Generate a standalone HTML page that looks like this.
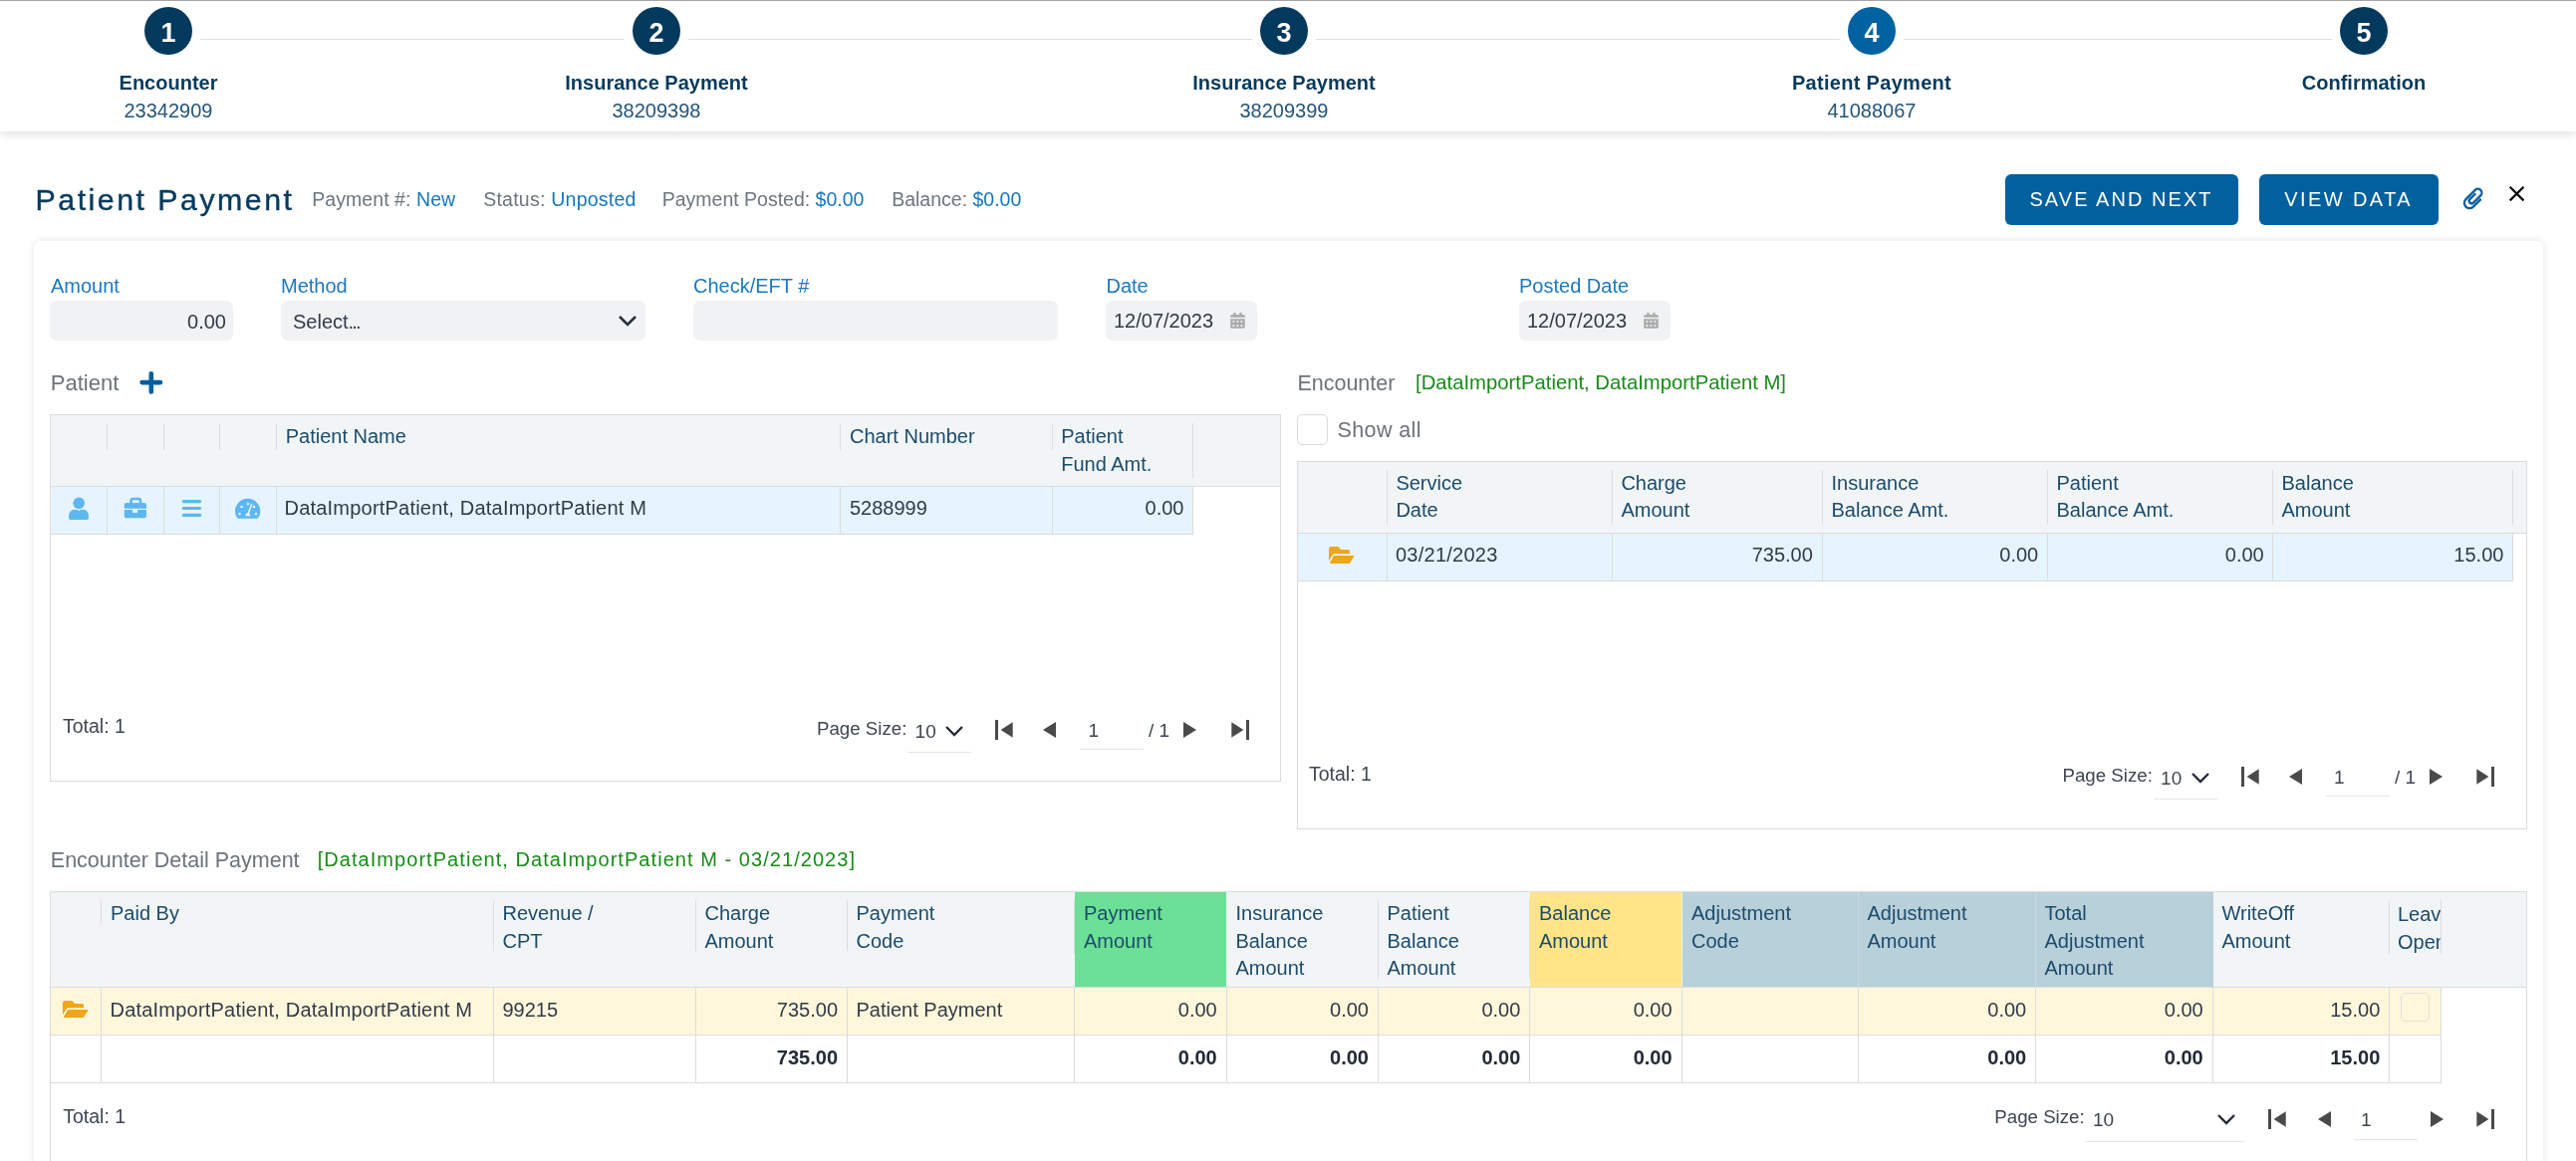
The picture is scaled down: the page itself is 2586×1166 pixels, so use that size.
<!DOCTYPE html>
<html><head><meta charset="utf-8"><title>Patient Payment</title>
<style>
html,body{margin:0;padding:0;width:2586px;height:1166px;overflow:hidden;background:#fff;font-family:"Liberation Sans", sans-serif;}
div{box-sizing:border-box;}
svg{position:absolute;overflow:visible;}
</style></head><body><div style="position:absolute;left:0;top:0;width:2586px;height:1166px;overflow:hidden;will-change:transform;">
<div style="position:absolute;left:0px;top:0px;width:2586px;height:132px;background:#fff;box-shadow:0 3px 8px rgba(0,0,0,0.12);border-top:1px solid #a6a6a6;"></div>
<div style="position:absolute;left:201px;top:39px;width:426px;height:1px;background:#dcdfe2;"></div>
<div style="position:absolute;left:691px;top:39px;width:566px;height:1px;background:#dcdfe2;"></div>
<div style="position:absolute;left:1321px;top:39px;width:526px;height:1px;background:#dcdfe2;"></div>
<div style="position:absolute;left:1911px;top:39px;width:430px;height:1px;background:#dcdfe2;"></div>
<div style="position:absolute;left:145px;top:7px;width:48px;height:48px;background:#03395d;border-radius:50%;"></div>
<div style="position:absolute;left:-231px;width:800px;text-align:center;top:19.75px;font-size:27px;line-height:27px;color:#fff;font-weight:bold;white-space:nowrap;">1</div>
<div style="position:absolute;left:-231px;width:800px;text-align:center;top:72.50px;font-size:20px;line-height:20px;color:#073a5c;font-weight:bold;white-space:nowrap;">Encounter</div>
<div style="position:absolute;left:-231px;width:800px;text-align:center;top:101.30px;font-size:20px;line-height:20px;color:#23557a;font-weight:normal;white-space:nowrap;">23342909</div>
<div style="position:absolute;left:635px;top:7px;width:48px;height:48px;background:#03395d;border-radius:50%;"></div>
<div style="position:absolute;left:259px;width:800px;text-align:center;top:19.75px;font-size:27px;line-height:27px;color:#fff;font-weight:bold;white-space:nowrap;">2</div>
<div style="position:absolute;left:259px;width:800px;text-align:center;top:72.50px;font-size:20px;line-height:20px;color:#073a5c;font-weight:bold;white-space:nowrap;">Insurance Payment</div>
<div style="position:absolute;left:259px;width:800px;text-align:center;top:101.30px;font-size:20px;line-height:20px;color:#23557a;font-weight:normal;white-space:nowrap;">38209398</div>
<div style="position:absolute;left:1265px;top:7px;width:48px;height:48px;background:#03395d;border-radius:50%;"></div>
<div style="position:absolute;left:889px;width:800px;text-align:center;top:19.75px;font-size:27px;line-height:27px;color:#fff;font-weight:bold;white-space:nowrap;">3</div>
<div style="position:absolute;left:889px;width:800px;text-align:center;top:72.50px;font-size:20px;line-height:20px;color:#073a5c;font-weight:bold;white-space:nowrap;">Insurance Payment</div>
<div style="position:absolute;left:889px;width:800px;text-align:center;top:101.30px;font-size:20px;line-height:20px;color:#23557a;font-weight:normal;white-space:nowrap;">38209399</div>
<div style="position:absolute;left:1855px;top:7px;width:48px;height:48px;background:#0062a0;border-radius:50%;"></div>
<div style="position:absolute;left:1479px;width:800px;text-align:center;top:19.75px;font-size:27px;line-height:27px;color:#fff;font-weight:bold;white-space:nowrap;">4</div>
<div style="position:absolute;left:1479px;width:800px;text-align:center;top:72.50px;font-size:20px;line-height:20px;color:#073a5c;font-weight:bold;letter-spacing:0.3px;white-space:nowrap;">Patient Payment</div>
<div style="position:absolute;left:1479px;width:800px;text-align:center;top:101.30px;font-size:20px;line-height:20px;color:#23557a;font-weight:normal;white-space:nowrap;">41088067</div>
<div style="position:absolute;left:2349px;top:7px;width:48px;height:48px;background:#03395d;border-radius:50%;"></div>
<div style="position:absolute;left:1973px;width:800px;text-align:center;top:19.75px;font-size:27px;line-height:27px;color:#fff;font-weight:bold;white-space:nowrap;">5</div>
<div style="position:absolute;left:1973px;width:800px;text-align:center;top:72.50px;font-size:20px;line-height:20px;color:#073a5c;font-weight:bold;white-space:nowrap;">Confirmation</div>
<div style="position:absolute;left:35.6px;top:186.06px;font-size:30.3px;line-height:30.3px;color:#073a5e;font-weight:normal;letter-spacing:2.5px;white-space:nowrap;-webkit-text-stroke:0.4px #073a5e;">Patient Payment</div>
<div style="position:absolute;left:313.2px;top:191.07px;font-size:19.5px;line-height:19.5px;color:#6c7680;font-weight:normal;letter-spacing:0.07px;white-space:nowrap;">Payment #: <span style="color:#1477bd">New</span></div>
<div style="position:absolute;left:485.2px;top:191.07px;font-size:19.5px;line-height:19.5px;color:#6c7680;font-weight:normal;letter-spacing:0.24px;white-space:nowrap;">Status: <span style="color:#1477bd">Unposted</span></div>
<div style="position:absolute;left:664.7px;top:191.07px;font-size:19.5px;line-height:19.5px;color:#6c7680;font-weight:normal;white-space:nowrap;">Payment Posted: <span style="color:#1477bd">$0.00</span></div>
<div style="position:absolute;left:895.2px;top:191.07px;font-size:19.5px;line-height:19.5px;color:#6c7680;font-weight:normal;white-space:nowrap;">Balance: <span style="color:#1477bd">$0.00</span></div>
<div style="position:absolute;left:2013px;top:175px;width:234px;height:51px;background:#01609e;border-radius:6px;"></div>
<div style="position:absolute;left:1729.525px;width:800px;text-align:center;top:190.30px;font-size:20px;line-height:20px;color:#fff;font-weight:normal;letter-spacing:2.05px;white-space:nowrap;">SAVE AND NEXT</div>
<div style="position:absolute;left:2268px;top:175px;width:180px;height:51px;background:#01609e;border-radius:6px;"></div>
<div style="position:absolute;left:1957.6999999999998px;width:800px;text-align:center;top:190.30px;font-size:20px;line-height:20px;color:#fff;font-weight:normal;letter-spacing:2.4px;white-space:nowrap;">VIEW DATA</div>
<svg style="left:2465px;top:182px" width="35" height="35" viewBox="0 0 35 35"><path d="M25.67 17.89 L17.93 25.64 A5.3 5.3 0 0 1 10.43 18.14 L19.73 8.84 A3.9 3.9 0 0 1 25.25 14.36 L17.96 21.64 A2.5 2.5 0 0 1 14.43 18.1 L20.3 12.23" fill="none" stroke="#0b5f9e" stroke-width="2.3"/></svg>
<svg style="left:2517px;top:185px" width="20" height="20" viewBox="0 0 20 20"><path d="M2.7 2.7 L16.4 16.4 M16.4 2.7 L2.7 16.4" stroke="#000" stroke-width="2.2"/></svg>
<div style="position:absolute;left:34px;top:242px;width:2519px;height:1058px;background:#fff;border-radius:7px;box-shadow:0 0 8px rgba(0,0,0,0.11);"></div>
<div style="position:absolute;left:51px;top:277.00px;font-size:20px;line-height:20px;color:#1b79be;font-weight:normal;white-space:nowrap;">Amount</div>
<div style="position:absolute;left:282px;top:277.00px;font-size:20px;line-height:20px;color:#1b79be;font-weight:normal;white-space:nowrap;">Method</div>
<div style="position:absolute;left:696px;top:277.00px;font-size:20px;line-height:20px;color:#1b79be;font-weight:normal;white-space:nowrap;">Check/EFT #</div>
<div style="position:absolute;left:1110.5px;top:277.00px;font-size:20px;line-height:20px;color:#1b79be;font-weight:normal;white-space:nowrap;">Date</div>
<div style="position:absolute;left:1525px;top:277.00px;font-size:20px;line-height:20px;color:#1b79be;font-weight:normal;white-space:nowrap;">Posted Date</div>
<div style="position:absolute;left:50px;top:302px;width:184px;height:40px;background:#f0f2f4;border-radius:7px;"></div>
<div style="position:absolute;left:282px;top:302px;width:366px;height:40px;background:#f0f2f4;border-radius:7px;"></div>
<div style="position:absolute;left:696px;top:302px;width:366px;height:40px;background:#f0f2f4;border-radius:7px;"></div>
<div style="position:absolute;left:1110px;top:302px;width:152px;height:40px;background:#f0f2f4;border-radius:7px;"></div>
<div style="position:absolute;left:1525px;top:302px;width:152px;height:40px;background:#f0f2f4;border-radius:7px;"></div>
<div style="position:absolute;right:2359px;text-align:right;top:312.50px;font-size:20px;line-height:20px;color:#313a48;font-weight:normal;white-space:nowrap;">0.00</div>
<div style="position:absolute;left:294px;top:313.00px;font-size:20px;line-height:20px;color:#313a48;font-weight:normal;white-space:nowrap;">Select<span style="letter-spacing:-1.8px">...</span></div>
<svg style="left:619px;top:314px" width="22" height="16" viewBox="0 0 22 16"><path d="M3 4 L11 12 L19 4" fill="none" stroke="#27303c" stroke-width="2.6"/></svg>
<div style="position:absolute;left:1118px;top:312.00px;font-size:20px;line-height:20px;color:#313a48;font-weight:normal;white-space:nowrap;">12/07/2023</div>
<svg style="left:1235px;top:314px" width="16" height="17" viewBox="0 0 16 17"><g fill="#ababab"><rect x="3.3" y="0" width="2.4" height="3" rx="0.5"/><rect x="9.3" y="0" width="2.4" height="3" rx="0.5"/><path d="M0.2 4.7 V3.6 Q0.2 2.1 1.7 2.1 H13.3 Q14.8 2.1 14.8 3.6 V4.7 Z"/><path d="M0.2 6.2 H14.8 V14.3 Q14.8 15.8 13.3 15.8 H1.7 Q0.2 15.8 0.2 14.3 Z"/></g><rect x="2.5" y="8.0" width="1.8" height="1.8" fill="#f0f2f4"/><rect x="2.5" y="12.1" width="1.8" height="1.8" fill="#f0f2f4"/><rect x="6.5" y="8.0" width="1.8" height="1.8" fill="#f0f2f4"/><rect x="6.5" y="12.1" width="1.8" height="1.8" fill="#f0f2f4"/><rect x="10.5" y="8.0" width="1.8" height="1.8" fill="#f0f2f4"/><rect x="10.5" y="12.1" width="1.8" height="1.8" fill="#f0f2f4"/></svg>
<div style="position:absolute;left:1533px;top:312.00px;font-size:20px;line-height:20px;color:#313a48;font-weight:normal;white-space:nowrap;">12/07/2023</div>
<svg style="left:1650px;top:314px" width="16" height="17" viewBox="0 0 16 17"><g fill="#ababab"><rect x="3.3" y="0" width="2.4" height="3" rx="0.5"/><rect x="9.3" y="0" width="2.4" height="3" rx="0.5"/><path d="M0.2 4.7 V3.6 Q0.2 2.1 1.7 2.1 H13.3 Q14.8 2.1 14.8 3.6 V4.7 Z"/><path d="M0.2 6.2 H14.8 V14.3 Q14.8 15.8 13.3 15.8 H1.7 Q0.2 15.8 0.2 14.3 Z"/></g><rect x="2.5" y="8.0" width="1.8" height="1.8" fill="#f0f2f4"/><rect x="2.5" y="12.1" width="1.8" height="1.8" fill="#f0f2f4"/><rect x="6.5" y="8.0" width="1.8" height="1.8" fill="#f0f2f4"/><rect x="6.5" y="12.1" width="1.8" height="1.8" fill="#f0f2f4"/><rect x="10.5" y="8.0" width="1.8" height="1.8" fill="#f0f2f4"/><rect x="10.5" y="12.1" width="1.8" height="1.8" fill="#f0f2f4"/></svg>
<div style="position:absolute;left:50.8px;top:374.00px;font-size:22px;line-height:22px;color:#6b737c;font-weight:normal;white-space:nowrap;">Patient</div>
<svg style="left:140px;top:372px" width="24" height="24" viewBox="0 0 24 24"><path d="M11.8 3.2 V21.4 M2.6 12.1 H21" stroke="#03609d" stroke-width="4.6" stroke-linecap="round"/></svg>
<div style="position:absolute;left:50px;top:416px;width:1236px;height:369px;border:1px solid #dcdcdc;background:#fff;"></div>
<div style="position:absolute;left:51px;top:417px;width:1234px;height:71px;background:#f1f5f6;"></div>
<div style="position:absolute;left:51px;top:488px;width:1146px;height:1px;background:#dcdcdc;"></div>
<div style="position:absolute;left:1197px;top:488px;width:88px;height:1px;background:#dcdcdc;"></div>
<div style="position:absolute;left:51px;top:489px;width:1146px;height:47px;background:#e6f4fd;"></div>
<div style="position:absolute;left:51px;top:536px;width:1146px;height:1px;background:#dcdcdc;"></div>
<div style="position:absolute;left:107px;top:425px;width:1px;height:27px;background:#dcdcdc;"></div>
<div style="position:absolute;left:107px;top:489px;width:1px;height:47px;background:#dcdcdc;"></div>
<div style="position:absolute;left:164px;top:425px;width:1px;height:27px;background:#dcdcdc;"></div>
<div style="position:absolute;left:164px;top:489px;width:1px;height:47px;background:#dcdcdc;"></div>
<div style="position:absolute;left:220px;top:425px;width:1px;height:27px;background:#dcdcdc;"></div>
<div style="position:absolute;left:220px;top:489px;width:1px;height:47px;background:#dcdcdc;"></div>
<div style="position:absolute;left:277px;top:425px;width:1px;height:27px;background:#dcdcdc;"></div>
<div style="position:absolute;left:277px;top:489px;width:1px;height:47px;background:#dcdcdc;"></div>
<div style="position:absolute;left:843px;top:425px;width:1px;height:27px;background:#dcdcdc;"></div>
<div style="position:absolute;left:843px;top:489px;width:1px;height:47px;background:#dcdcdc;"></div>
<div style="position:absolute;left:1056px;top:425px;width:1px;height:27px;background:#dcdcdc;"></div>
<div style="position:absolute;left:1056px;top:489px;width:1px;height:47px;background:#dcdcdc;"></div>
<div style="position:absolute;left:1197px;top:425px;width:1px;height:55px;background:#dcdcdc;"></div>
<div style="position:absolute;left:1197px;top:489px;width:1px;height:48px;background:#dcdcdc;"></div>
<div style="position:absolute;left:286.7px;top:428.40px;font-size:20px;line-height:20px;color:#1c4b6b;font-weight:normal;white-space:nowrap;">Patient Name</div>
<div style="position:absolute;left:853px;top:428.40px;font-size:20px;line-height:20px;color:#1c4b6b;font-weight:normal;white-space:nowrap;">Chart Number</div>
<div style="position:absolute;left:1065.2px;top:428.40px;font-size:20px;line-height:20px;color:#1c4b6b;font-weight:normal;white-space:nowrap;">Patient</div>
<div style="position:absolute;left:1065.2px;top:455.50px;font-size:20px;line-height:20px;color:#1c4b6b;font-weight:normal;white-space:nowrap;">Fund Amt.</div>
<div style="position:absolute;left:285.5px;top:500.40px;font-size:20px;line-height:20px;color:#313a48;font-weight:normal;letter-spacing:0.21px;white-space:nowrap;">DataImportPatient, DataImportPatient M</div>
<div style="position:absolute;left:853px;top:500.40px;font-size:20px;line-height:20px;color:#313a48;font-weight:normal;white-space:nowrap;">5288999</div>
<div style="position:absolute;right:1397.5px;text-align:right;top:500.40px;font-size:20px;line-height:20px;color:#313a48;font-weight:normal;white-space:nowrap;">0.00</div>
<svg style="left:69px;top:499px" width="21" height="24" viewBox="0 0 21 24"><circle cx="10.2" cy="6.3" r="5.8" fill="#5cb7f3"/><path d="M0 20 Q0 13 6 12.8 Q8.5 12.8 10.1 14.2 Q11.7 12.8 14.2 12.8 Q20 13 20 20 L20 21.2 Q20 23 18.2 23 L1.8 23 Q0 23 0 21.2 Z" fill="#5cb7f3"/></svg>
<svg style="left:124px;top:499px" width="24" height="23" viewBox="0 0 24 23"><path d="M7.6 6.5 V3.6 Q7.6 2 9.2 2 H15.4 Q17 2 17 3.6 V6.5" fill="none" stroke="#5cb7f3" stroke-width="2.6"/><path d="M0.8 11.8 V8 Q0.8 6 2.8 6 H21 Q23 6 23 8 V11.8 Z" fill="#5cb7f3"/><path d="M0.8 13 H9 V16 H14.2 V13 H23 V19.3 Q23 21.3 21 21.3 H2.8 Q0.8 21.3 0.8 19.3 Z" fill="#5cb7f3"/></svg>
<svg style="left:182px;top:499px" width="22" height="22" viewBox="0 0 22 22"><rect x="0.7" y="3" width="19.5" height="3.2" rx="1.6" fill="#5cb7f3"/><rect x="0.7" y="9.9" width="19.5" height="3.2" rx="1.6" fill="#5cb7f3"/><rect x="0.7" y="16.8" width="19.5" height="3.2" rx="1.6" fill="#5cb7f3"/></svg>
<svg style="left:236px;top:500.8px" width="26" height="22" viewBox="0 0 26 22"><path d="M2.9 19.7 Q1.3 18.2 0.6 16.2 A12.65 12.65 0 1 1 24.7 16.2 Q24 18.2 22.4 19.7 Z" fill="#5cb7f3"/><g fill="#e6f4fd"><circle cx="6.6" cy="8.1" r="1.25"/><circle cx="12.9" cy="5.1" r="1.25"/><circle cx="19" cy="8.1" r="1.25"/><circle cx="4.5" cy="14.9" r="1.25"/><circle cx="21" cy="14.9" r="1.25"/><path d="M10.3 17.3 L11.2 14.6 H14.6 L15.5 17.3 Z"/></g><path d="M12.9 15.5 L16.6 5.5" stroke="#e6f4fd" stroke-width="1.6" stroke-linecap="round"/></svg>
<div style="position:absolute;left:63px;top:720.18px;font-size:19.5px;line-height:19.5px;color:#3d4652;font-weight:normal;white-space:nowrap;">Total: 1</div>
<div style="position:absolute;left:820px;top:722.70px;font-size:18.7px;line-height:18.7px;color:#3d4652;font-weight:normal;white-space:nowrap;">Page Size:</div>
<div style="position:absolute;left:918.6px;top:724.75px;font-size:19px;line-height:19px;color:#3d4652;font-weight:normal;white-space:nowrap;">10</div>
<svg style="left:947px;top:727px" width="22" height="14" viewBox="0 0 22 14"><path d="M3 3 L11 11 L19 3" fill="none" stroke="#242c38" stroke-width="2.4"/></svg>
<div style="position:absolute;left:911px;top:755px;width:64px;height:1px;background:#e3e5e8;"></div>
<svg style="left:999px;top:723px" width="19" height="20" viewBox="0 0 19 20"><rect x="0" y="0" width="3" height="20" fill="#4a4a4a"/><path d="M5.6 10 L17.7 2.25 L17.7 17.8 Z" fill="#4a4a4a"/></svg>
<svg style="left:1047px;top:725px" width="13" height="16" viewBox="0 0 13 16"><path d="M0 8 L13 0 L13 16 Z" fill="#4a4a4a"/></svg>
<div style="position:absolute;left:1092.5px;top:724.35px;font-size:19px;line-height:19px;color:#3d4652;font-weight:normal;white-space:nowrap;">1</div>
<div style="position:absolute;left:1084px;top:752px;width:64px;height:1px;background:#e3e5e8;"></div>
<div style="position:absolute;left:1153px;top:724.35px;font-size:19px;line-height:19px;color:#3d4652;font-weight:normal;white-space:nowrap;">/ 1</div>
<svg style="left:1188px;top:725px" width="13" height="16" viewBox="0 0 13 16"><path d="M13 8 L0 0 L0 16 Z" fill="#4a4a4a"/></svg>
<svg style="left:1235px;top:723px" width="19" height="20" viewBox="0 0 19 20"><rect x="16" y="0" width="3" height="20" fill="#4a4a4a"/><path d="M13.4 10 L1.3 2.25 L1.3 17.8 Z" fill="#4a4a4a"/></svg>
<div style="position:absolute;left:1302.4px;top:374.97px;font-size:21.5px;line-height:21.5px;color:#6b737c;font-weight:normal;white-space:nowrap;">Encounter</div>
<div style="position:absolute;left:1421px;top:373.95px;font-size:20.3px;line-height:20.3px;color:#178c17;font-weight:normal;white-space:nowrap;">[DataImportPatient, DataImportPatient M]</div>
<div style="position:absolute;left:1302px;top:416px;width:31px;height:31px;border:1px solid #d9dcdf;border-radius:5px;background:#fff;"></div>
<div style="position:absolute;left:1342.5px;top:422.27px;font-size:21.5px;line-height:21.5px;color:#6b737c;font-weight:normal;letter-spacing:0.38px;white-space:nowrap;">Show all</div>
<div style="position:absolute;left:1302px;top:463px;width:1235px;height:370px;border:1px solid #dcdcdc;background:#fff;"></div>
<div style="position:absolute;left:1303px;top:464px;width:1233px;height:71px;background:#f1f5f6;"></div>
<div style="position:absolute;left:1303px;top:535px;width:1233px;height:1px;background:#dcdcdc;"></div>
<div style="position:absolute;left:1303px;top:536px;width:1219px;height:47px;background:#e6f4fd;"></div>
<div style="position:absolute;left:1303px;top:583px;width:1220px;height:1px;background:#dcdcdc;"></div>
<div style="position:absolute;left:1392px;top:472px;width:1px;height:55px;background:#dcdcdc;"></div>
<div style="position:absolute;left:1392px;top:536px;width:1px;height:47px;background:#dcdcdc;"></div>
<div style="position:absolute;left:1618px;top:472px;width:1px;height:55px;background:#dcdcdc;"></div>
<div style="position:absolute;left:1618px;top:536px;width:1px;height:47px;background:#dcdcdc;"></div>
<div style="position:absolute;left:1829px;top:472px;width:1px;height:55px;background:#dcdcdc;"></div>
<div style="position:absolute;left:1829px;top:536px;width:1px;height:47px;background:#dcdcdc;"></div>
<div style="position:absolute;left:2055px;top:472px;width:1px;height:55px;background:#dcdcdc;"></div>
<div style="position:absolute;left:2055px;top:536px;width:1px;height:47px;background:#dcdcdc;"></div>
<div style="position:absolute;left:2281px;top:472px;width:1px;height:55px;background:#dcdcdc;"></div>
<div style="position:absolute;left:2281px;top:536px;width:1px;height:47px;background:#dcdcdc;"></div>
<div style="position:absolute;left:2522px;top:472px;width:1px;height:55px;background:#dcdcdc;"></div>
<div style="position:absolute;left:2522px;top:536px;width:1px;height:47px;background:#dcdcdc;"></div>
<div style="position:absolute;left:1401.4px;top:475.20px;font-size:20px;line-height:20px;color:#1c4b6b;font-weight:normal;white-space:nowrap;">Service</div>
<div style="position:absolute;left:1401.4px;top:502.20px;font-size:20px;line-height:20px;color:#1c4b6b;font-weight:normal;white-space:nowrap;">Date</div>
<div style="position:absolute;left:1627.4px;top:475.20px;font-size:20px;line-height:20px;color:#1c4b6b;font-weight:normal;white-space:nowrap;">Charge</div>
<div style="position:absolute;left:1627.4px;top:502.20px;font-size:20px;line-height:20px;color:#1c4b6b;font-weight:normal;white-space:nowrap;">Amount</div>
<div style="position:absolute;left:1838.5px;top:475.20px;font-size:20px;line-height:20px;color:#1c4b6b;font-weight:normal;white-space:nowrap;">Insurance</div>
<div style="position:absolute;left:1838.5px;top:502.20px;font-size:20px;line-height:20px;color:#1c4b6b;font-weight:normal;white-space:nowrap;">Balance Amt.</div>
<div style="position:absolute;left:2064.5px;top:475.20px;font-size:20px;line-height:20px;color:#1c4b6b;font-weight:normal;white-space:nowrap;">Patient</div>
<div style="position:absolute;left:2064.5px;top:502.20px;font-size:20px;line-height:20px;color:#1c4b6b;font-weight:normal;white-space:nowrap;">Balance Amt.</div>
<div style="position:absolute;left:2290.5px;top:475.20px;font-size:20px;line-height:20px;color:#1c4b6b;font-weight:normal;white-space:nowrap;">Balance</div>
<div style="position:absolute;left:2290.5px;top:502.20px;font-size:20px;line-height:20px;color:#1c4b6b;font-weight:normal;white-space:nowrap;">Amount</div>
<svg style="left:1334px;top:549px" width="27" height="18" viewBox="0 0 27 18"><path d="M0 2.2 Q0 0 2.2 0 L9.4 0 L12.1 3 L19.3 3 Q21.1 3 21.1 4.9 L21.1 7.3 L5.9 7.3 Q4.3 7.3 3.5 8.6 L0 14.2 Z" fill="#f0a619"/><path d="M5.9 9.1 Q4.9 9.1 4.5 9.9 L1 16.2 Q0.8 16.9 1.5 16.9 L20.3 16.9 Q20.9 16.9 21.3 16.3 L25.7 9.1 Z" fill="#f0a619"/></svg>
<div style="position:absolute;left:1401px;top:547.00px;font-size:20px;line-height:20px;color:#313a48;font-weight:normal;letter-spacing:0.25px;white-space:nowrap;">03/21/2023</div>
<div style="position:absolute;right:766.2px;text-align:right;top:547.00px;font-size:20px;line-height:20px;color:#313a48;font-weight:normal;white-space:nowrap;">735.00</div>
<div style="position:absolute;right:539.8px;text-align:right;top:547.00px;font-size:20px;line-height:20px;color:#313a48;font-weight:normal;white-space:nowrap;">0.00</div>
<div style="position:absolute;right:313.3000000000002px;text-align:right;top:547.00px;font-size:20px;line-height:20px;color:#313a48;font-weight:normal;white-space:nowrap;">0.00</div>
<div style="position:absolute;right:72.59999999999991px;text-align:right;top:547.00px;font-size:20px;line-height:20px;color:#313a48;font-weight:normal;white-space:nowrap;">15.00</div>
<div style="position:absolute;left:1314px;top:767.58px;font-size:19.5px;line-height:19.5px;color:#3d4652;font-weight:normal;white-space:nowrap;">Total: 1</div>
<div style="position:absolute;left:2070.5px;top:769.70px;font-size:18.7px;line-height:18.7px;color:#3d4652;font-weight:normal;white-space:nowrap;">Page Size:</div>
<div style="position:absolute;left:2169.1px;top:771.75px;font-size:19px;line-height:19px;color:#3d4652;font-weight:normal;white-space:nowrap;">10</div>
<svg style="left:2197.5px;top:774px" width="22" height="14" viewBox="0 0 22 14"><path d="M3 3 L11 11 L19 3" fill="none" stroke="#242c38" stroke-width="2.4"/></svg>
<div style="position:absolute;left:2161.5px;top:802px;width:64.0px;height:1px;background:#e3e5e8;"></div>
<svg style="left:2249.5px;top:770px" width="19" height="20" viewBox="0 0 19 20"><rect x="0" y="0" width="3" height="20" fill="#4a4a4a"/><path d="M5.6 10 L17.7 2.25 L17.7 17.8 Z" fill="#4a4a4a"/></svg>
<svg style="left:2297.5px;top:772px" width="13" height="16" viewBox="0 0 13 16"><path d="M0 8 L13 0 L13 16 Z" fill="#4a4a4a"/></svg>
<div style="position:absolute;left:2343.0px;top:771.35px;font-size:19px;line-height:19px;color:#3d4652;font-weight:normal;white-space:nowrap;">1</div>
<div style="position:absolute;left:2335px;top:799.4px;width:64px;height:1.0px;background:#e3e5e8;"></div>
<div style="position:absolute;left:2404px;top:771.35px;font-size:19px;line-height:19px;color:#3d4652;font-weight:normal;white-space:nowrap;">/ 1</div>
<svg style="left:2439px;top:772px" width="13" height="16" viewBox="0 0 13 16"><path d="M13 8 L0 0 L0 16 Z" fill="#4a4a4a"/></svg>
<svg style="left:2485px;top:770px" width="19" height="20" viewBox="0 0 19 20"><rect x="16" y="0" width="3" height="20" fill="#4a4a4a"/><path d="M13.4 10 L1.3 2.25 L1.3 17.8 Z" fill="#4a4a4a"/></svg>
<div style="position:absolute;left:50.8px;top:853.98px;font-size:21.5px;line-height:21.5px;color:#6b737c;font-weight:normal;white-space:nowrap;">Encounter Detail Payment</div>
<div style="position:absolute;left:318.7px;top:853.00px;font-size:20px;line-height:20px;color:#178c17;font-weight:normal;letter-spacing:1.05px;white-space:nowrap;">[DataImportPatient, DataImportPatient M - 03/21/2023]</div>
<div style="position:absolute;left:50px;top:895px;width:2487px;height:505px;border:1px solid #dcdcdc;background:#fff;"></div>
<div style="position:absolute;left:51px;top:896px;width:2485px;height:95px;background:#f1f5f6;"></div>
<div style="position:absolute;left:1079px;top:896px;width:152px;height:95px;background:#6ce096;"></div>
<div style="position:absolute;left:1536px;top:896px;width:152px;height:95px;background:#ffe488;"></div>
<div style="position:absolute;left:1689px;top:896px;width:533px;height:95px;background:#b8d0da;"></div>
<div style="position:absolute;left:51px;top:991px;width:2485px;height:1px;background:#dcdcdc;"></div>
<div style="position:absolute;left:51px;top:992px;width:2399px;height:47px;background:#fff7dc;"></div>
<div style="position:absolute;left:51px;top:1039px;width:2400px;height:1px;background:#dcdcdc;"></div>
<div style="position:absolute;left:51px;top:1087px;width:2400px;height:1px;background:#dcdcdc;"></div>
<div style="position:absolute;left:101px;top:904px;width:1px;height:24px;background:#dcdcdc;"></div>
<div style="position:absolute;left:101px;top:992px;width:1px;height:95px;background:#dcdcdc;"></div>
<div style="position:absolute;left:495px;top:904px;width:1px;height:51px;background:#dcdcdc;"></div>
<div style="position:absolute;left:495px;top:992px;width:1px;height:95px;background:#dcdcdc;"></div>
<div style="position:absolute;left:698px;top:904px;width:1px;height:51px;background:#dcdcdc;"></div>
<div style="position:absolute;left:698px;top:992px;width:1px;height:95px;background:#dcdcdc;"></div>
<div style="position:absolute;left:850px;top:904px;width:1px;height:51px;background:#dcdcdc;"></div>
<div style="position:absolute;left:850px;top:992px;width:1px;height:95px;background:#dcdcdc;"></div>
<div style="position:absolute;left:1078px;top:904px;width:1px;height:54px;background:#dcdcdc;"></div>
<div style="position:absolute;left:1078px;top:992px;width:1px;height:95px;background:#dcdcdc;"></div>
<div style="position:absolute;left:1231px;top:992px;width:1px;height:95px;background:#dcdcdc;"></div>
<div style="position:absolute;left:1383px;top:904px;width:1px;height:79px;background:#dcdcdc;"></div>
<div style="position:absolute;left:1383px;top:992px;width:1px;height:95px;background:#dcdcdc;"></div>
<div style="position:absolute;left:1535px;top:904px;width:1px;height:79px;background:#dcdcdc;"></div>
<div style="position:absolute;left:1535px;top:992px;width:1px;height:95px;background:#dcdcdc;"></div>
<div style="position:absolute;left:1688px;top:992px;width:1px;height:95px;background:#dcdcdc;"></div>
<div style="position:absolute;left:1865px;top:896px;width:1px;height:95px;background:#c9dce3;"></div>
<div style="position:absolute;left:1865px;top:992px;width:1px;height:95px;background:#dcdcdc;"></div>
<div style="position:absolute;left:2043px;top:896px;width:1px;height:95px;background:#c9dce3;"></div>
<div style="position:absolute;left:2043px;top:992px;width:1px;height:95px;background:#dcdcdc;"></div>
<div style="position:absolute;left:2221px;top:992px;width:1px;height:95px;background:#dcdcdc;"></div>
<div style="position:absolute;left:2398px;top:904px;width:1px;height:54px;background:#dcdcdc;"></div>
<div style="position:absolute;left:2398px;top:992px;width:1px;height:95px;background:#dcdcdc;"></div>
<div style="position:absolute;left:2450px;top:904px;width:1px;height:54px;background:#dcdcdc;"></div>
<div style="position:absolute;left:2450px;top:992px;width:1px;height:95px;background:#dcdcdc;"></div>
<div style="position:absolute;left:111px;top:907.40px;font-size:20px;line-height:20px;color:#1c4b6b;font-weight:normal;white-space:nowrap;">Paid By</div>
<div style="position:absolute;left:504.5px;top:907.40px;font-size:20px;line-height:20px;color:#1c4b6b;font-weight:normal;white-space:nowrap;">Revenue /</div>
<div style="position:absolute;left:504.5px;top:934.80px;font-size:20px;line-height:20px;color:#1c4b6b;font-weight:normal;white-space:nowrap;">CPT</div>
<div style="position:absolute;left:707.5px;top:907.40px;font-size:20px;line-height:20px;color:#1c4b6b;font-weight:normal;white-space:nowrap;">Charge</div>
<div style="position:absolute;left:707.5px;top:934.80px;font-size:20px;line-height:20px;color:#1c4b6b;font-weight:normal;white-space:nowrap;">Amount</div>
<div style="position:absolute;left:859.5px;top:907.40px;font-size:20px;line-height:20px;color:#1c4b6b;font-weight:normal;white-space:nowrap;">Payment</div>
<div style="position:absolute;left:859.5px;top:934.80px;font-size:20px;line-height:20px;color:#1c4b6b;font-weight:normal;white-space:nowrap;">Code</div>
<div style="position:absolute;left:1088px;top:907.40px;font-size:20px;line-height:20px;color:#1c4b6b;font-weight:normal;white-space:nowrap;">Payment</div>
<div style="position:absolute;left:1088px;top:934.80px;font-size:20px;line-height:20px;color:#1c4b6b;font-weight:normal;white-space:nowrap;">Amount</div>
<div style="position:absolute;left:1240.5px;top:907.40px;font-size:20px;line-height:20px;color:#1c4b6b;font-weight:normal;white-space:nowrap;">Insurance</div>
<div style="position:absolute;left:1240.5px;top:934.80px;font-size:20px;line-height:20px;color:#1c4b6b;font-weight:normal;white-space:nowrap;">Balance</div>
<div style="position:absolute;left:1240.5px;top:962.20px;font-size:20px;line-height:20px;color:#1c4b6b;font-weight:normal;white-space:nowrap;">Amount</div>
<div style="position:absolute;left:1392.5px;top:907.40px;font-size:20px;line-height:20px;color:#1c4b6b;font-weight:normal;white-space:nowrap;">Patient</div>
<div style="position:absolute;left:1392.5px;top:934.80px;font-size:20px;line-height:20px;color:#1c4b6b;font-weight:normal;white-space:nowrap;">Balance</div>
<div style="position:absolute;left:1392.5px;top:962.20px;font-size:20px;line-height:20px;color:#1c4b6b;font-weight:normal;white-space:nowrap;">Amount</div>
<div style="position:absolute;left:1545px;top:907.40px;font-size:20px;line-height:20px;color:#1c4b6b;font-weight:normal;white-space:nowrap;">Balance</div>
<div style="position:absolute;left:1545px;top:934.80px;font-size:20px;line-height:20px;color:#1c4b6b;font-weight:normal;white-space:nowrap;">Amount</div>
<div style="position:absolute;left:1698px;top:907.40px;font-size:20px;line-height:20px;color:#1c4b6b;font-weight:normal;white-space:nowrap;">Adjustment</div>
<div style="position:absolute;left:1698px;top:934.80px;font-size:20px;line-height:20px;color:#1c4b6b;font-weight:normal;white-space:nowrap;">Code</div>
<div style="position:absolute;left:1874.5px;top:907.40px;font-size:20px;line-height:20px;color:#1c4b6b;font-weight:normal;white-space:nowrap;">Adjustment</div>
<div style="position:absolute;left:1874.5px;top:934.80px;font-size:20px;line-height:20px;color:#1c4b6b;font-weight:normal;white-space:nowrap;">Amount</div>
<div style="position:absolute;left:2052.5px;top:907.40px;font-size:20px;line-height:20px;color:#1c4b6b;font-weight:normal;white-space:nowrap;">Total</div>
<div style="position:absolute;left:2052.5px;top:934.80px;font-size:20px;line-height:20px;color:#1c4b6b;font-weight:normal;white-space:nowrap;">Adjustment</div>
<div style="position:absolute;left:2052.5px;top:962.20px;font-size:20px;line-height:20px;color:#1c4b6b;font-weight:normal;white-space:nowrap;">Amount</div>
<div style="position:absolute;left:2230.5px;top:907.40px;font-size:20px;line-height:20px;color:#1c4b6b;font-weight:normal;white-space:nowrap;">WriteOff</div>
<div style="position:absolute;left:2230.5px;top:934.80px;font-size:20px;line-height:20px;color:#1c4b6b;font-weight:normal;white-space:nowrap;">Amount</div>
<div style="position:absolute;left:2407px;top:905.2px;width:43px;height:60px;overflow:hidden;font-size:20px;line-height:27.4px;color:#1c4b6b;white-space:nowrap;">Leave<br>Open</div>
<svg style="left:63px;top:1005px" width="27" height="18" viewBox="0 0 27 18"><path d="M0 2.2 Q0 0 2.2 0 L9.4 0 L12.1 3 L19.3 3 Q21.1 3 21.1 4.9 L21.1 7.3 L5.9 7.3 Q4.3 7.3 3.5 8.6 L0 14.2 Z" fill="#f0a619"/><path d="M5.9 9.1 Q4.9 9.1 4.5 9.9 L1 16.2 Q0.8 16.9 1.5 16.9 L20.3 16.9 Q20.9 16.9 21.3 16.3 L25.7 9.1 Z" fill="#f0a619"/></svg>
<div style="position:absolute;left:110.5px;top:1004.00px;font-size:20px;line-height:20px;color:#313a48;font-weight:normal;letter-spacing:0.21px;white-space:nowrap;">DataImportPatient, DataImportPatient M</div>
<div style="position:absolute;left:504.5px;top:1004.00px;font-size:20px;line-height:20px;color:#313a48;font-weight:normal;white-space:nowrap;">99215</div>
<div style="position:absolute;right:1745px;text-align:right;top:1004.00px;font-size:20px;line-height:20px;color:#313a48;font-weight:normal;white-space:nowrap;">735.00</div>
<div style="position:absolute;left:859.5px;top:1004.00px;font-size:20px;line-height:20px;color:#313a48;font-weight:normal;white-space:nowrap;">Patient Payment</div>
<div style="position:absolute;right:1364.3px;text-align:right;top:1004.00px;font-size:20px;line-height:20px;color:#313a48;font-weight:normal;white-space:nowrap;">0.00</div>
<div style="position:absolute;right:1364.3px;text-align:right;top:1052.00px;font-size:20px;line-height:20px;color:#222a36;font-weight:bold;white-space:nowrap;">0.00</div>
<div style="position:absolute;right:1212px;text-align:right;top:1004.00px;font-size:20px;line-height:20px;color:#313a48;font-weight:normal;white-space:nowrap;">0.00</div>
<div style="position:absolute;right:1212px;text-align:right;top:1052.00px;font-size:20px;line-height:20px;color:#222a36;font-weight:bold;white-space:nowrap;">0.00</div>
<div style="position:absolute;right:1059.7px;text-align:right;top:1004.00px;font-size:20px;line-height:20px;color:#313a48;font-weight:normal;white-space:nowrap;">0.00</div>
<div style="position:absolute;right:1059.7px;text-align:right;top:1052.00px;font-size:20px;line-height:20px;color:#222a36;font-weight:bold;white-space:nowrap;">0.00</div>
<div style="position:absolute;right:907.4000000000001px;text-align:right;top:1004.00px;font-size:20px;line-height:20px;color:#313a48;font-weight:normal;white-space:nowrap;">0.00</div>
<div style="position:absolute;right:907.4000000000001px;text-align:right;top:1052.00px;font-size:20px;line-height:20px;color:#222a36;font-weight:bold;white-space:nowrap;">0.00</div>
<div style="position:absolute;right:551.8px;text-align:right;top:1004.00px;font-size:20px;line-height:20px;color:#313a48;font-weight:normal;white-space:nowrap;">0.00</div>
<div style="position:absolute;right:551.8px;text-align:right;top:1052.00px;font-size:20px;line-height:20px;color:#222a36;font-weight:bold;white-space:nowrap;">0.00</div>
<div style="position:absolute;right:374.3000000000002px;text-align:right;top:1004.00px;font-size:20px;line-height:20px;color:#313a48;font-weight:normal;white-space:nowrap;">0.00</div>
<div style="position:absolute;right:374.3000000000002px;text-align:right;top:1052.00px;font-size:20px;line-height:20px;color:#222a36;font-weight:bold;white-space:nowrap;">0.00</div>
<div style="position:absolute;right:196.69999999999982px;text-align:right;top:1004.00px;font-size:20px;line-height:20px;color:#313a48;font-weight:normal;white-space:nowrap;">15.00</div>
<div style="position:absolute;right:196.69999999999982px;text-align:right;top:1052.00px;font-size:20px;line-height:20px;color:#222a36;font-weight:bold;white-space:nowrap;">15.00</div>
<div style="position:absolute;right:1745px;text-align:right;top:1052.00px;font-size:20px;line-height:20px;color:#222a36;font-weight:bold;white-space:nowrap;">735.00</div>
<div style="position:absolute;left:2410px;top:997px;width:29px;height:29px;border:1px solid #e2e0d8;border-radius:5px;background:#fff7dc;"></div>
<div style="position:absolute;left:63.2px;top:1112.17px;font-size:19.5px;line-height:19.5px;color:#3d4652;font-weight:normal;white-space:nowrap;">Total: 1</div>
<div style="position:absolute;left:2002.3px;top:1112.60px;font-size:18.7px;line-height:18.7px;color:#3d4652;font-weight:normal;white-space:nowrap;">Page Size:</div>
<div style="position:absolute;left:2101px;top:1114.65px;font-size:19px;line-height:19px;color:#3d4652;font-weight:normal;white-space:nowrap;">10</div>
<svg style="left:2224px;top:1117px" width="22" height="14" viewBox="0 0 22 14"><path d="M3 3 L11 11 L19 3" fill="none" stroke="#242c38" stroke-width="2.4"/></svg>
<div style="position:absolute;left:2093px;top:1145.5px;width:160px;height:1.0px;background:#e3e5e8;"></div>
<svg style="left:2276.6px;top:1114px" width="19" height="20" viewBox="0 0 19 20"><rect x="0" y="0" width="3" height="20" fill="#4a4a4a"/><path d="M5.6 10 L17.7 2.25 L17.7 17.8 Z" fill="#4a4a4a"/></svg>
<svg style="left:2326.5px;top:1116px" width="13" height="16" viewBox="0 0 13 16"><path d="M0 8 L13 0 L13 16 Z" fill="#4a4a4a"/></svg>
<div style="position:absolute;left:2370px;top:1115.35px;font-size:19px;line-height:19px;color:#3d4652;font-weight:normal;white-space:nowrap;">1</div>
<div style="position:absolute;left:2363px;top:1143.5px;width:63.5px;height:1.0px;background:#e3e5e8;"></div>
<svg style="left:2440.2px;top:1116px" width="13" height="16" viewBox="0 0 13 16"><path d="M13 8 L0 0 L0 16 Z" fill="#4a4a4a"/></svg>
<svg style="left:2484.7px;top:1114px" width="19" height="20" viewBox="0 0 19 20"><rect x="16" y="0" width="3" height="20" fill="#4a4a4a"/><path d="M13.4 10 L1.3 2.25 L1.3 17.8 Z" fill="#4a4a4a"/></svg>
</div></body></html>
